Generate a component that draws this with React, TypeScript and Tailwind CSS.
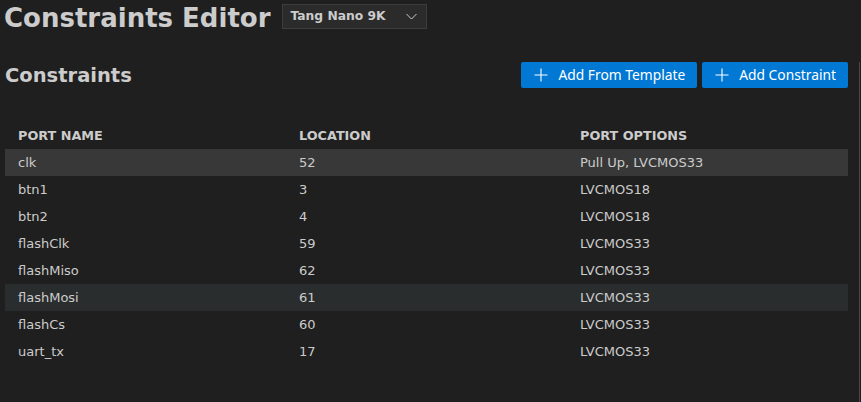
import React from "react";

interface Constraint {
  name: string;
  location: string;
  options: string;
}

const constraints: Constraint[] = [
  { name: "clk", location: "52", options: "Pull Up, LVCMOS33" },
  { name: "btn1", location: "3", options: "LVCMOS18" },
  { name: "btn2", location: "4", options: "LVCMOS18" },
  { name: "flashClk", location: "59", options: "LVCMOS33" },
  { name: "flashMiso", location: "62", options: "LVCMOS33" },
  { name: "flashMosi", location: "61", options: "LVCMOS33" },
  { name: "flashCs", location: "60", options: "LVCMOS33" },
  { name: "uart_tx", location: "17", options: "LVCMOS33" },
];

const PlusIcon = () => (
  <svg width="14" height="14" viewBox="0 0 14 14" fill="none">
    <path d="M7 0.5V13.5M0.5 7H13.5" stroke="currentColor" strokeWidth="1.1" />
  </svg>
);

const ChevronDown = () => (
  <svg width="11" height="7" viewBox="0 0 11 7" fill="none">
    <path d="M0.5 1L5.5 6L10.5 1" stroke="currentColor" strokeWidth="1" />
  </svg>
);

const ActionButton = ({ label }: { label: string }) => (
  <button className="flex items-center gap-[10px] h-[26px] pl-[13px] pr-[12px] rounded-[2px] bg-[#0078d4] hover:bg-[#026ec1] text-white text-[13.8px] font-['Noto_Sans',sans-serif]">
    <PlusIcon />
    <span className="leading-none">{label}</span>
  </button>
);

export default function App() {
  // first row is the selected one, flashMosi is under the pointer
  const selected = 0;
  const hovered = 5;

  return (
    <div className="w-[861px] h-[402px] bg-[#1f1f1f] text-[#cccccc] font-['DejaVu_Sans',sans-serif] overflow-hidden">
      <div className="flex items-start h-[37px] pl-[4px]">
        <h1 className="mt-[3px] text-[26px] leading-[30px] font-bold text-[#cccccc]">
          Constraints Editor
        </h1>
        <div className="ml-[11px] mt-[4px] flex items-center justify-between w-[145px] h-[25px] pl-[8px] pr-[9px] bg-[#2b2b2b] border border-[#3c3c3c]">
          <span className="text-[12.3px] font-bold leading-none">Tang Nano 9K</span>
          <ChevronDown />
        </div>
      </div>

      <div className="h-[365px] mr-[1px] pl-[5px] pr-[11px] border-r border-[#474747]">
        <div className="flex items-center justify-between mt-[25px]">
          <h2 className="text-[19.5px] leading-[23px] font-bold">Constraints</h2>
          <div className="flex gap-[5px]">
            <ActionButton label="Add From Template" />
            <ActionButton label="Add Constraint" />
          </div>
        </div>

        <div className="mt-[34px] text-[13px]">
          <div className="grid grid-cols-3 h-[27px] items-center font-bold text-[12.8px]">
            <div className="pl-[13px]">PORT NAME</div>
            <div className="pl-[13px]">LOCATION</div>
            <div className="pl-[13px]">PORT OPTIONS</div>
          </div>
          {constraints.map((c, i) => (
            <div
              key={c.name}
              className={`grid grid-cols-3 h-[27px] items-center ${
                i === selected ? "bg-[#383838]" : i === hovered ? "bg-[#2a2d2e]" : ""
              }`}
            >
              <div className="pl-[13px]">{c.name}</div>
              <div className="pl-[13px]">{c.location}</div>
              <div className="pl-[13px]">{c.options}</div>
            </div>
          ))}
        </div>
      </div>
    </div>
  );
}
